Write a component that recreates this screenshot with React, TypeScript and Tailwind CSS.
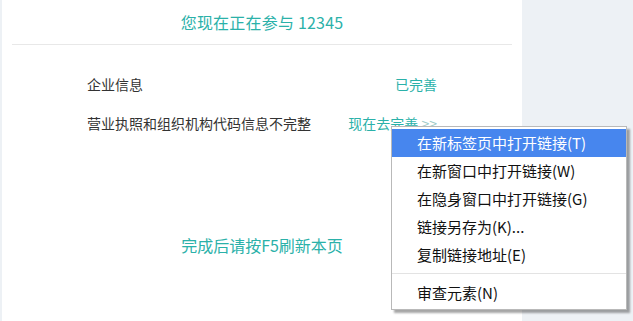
import type { CSSProperties } from "react";

// Page: white info panel with a browser-style context menu open over the link.

const font: CSSProperties = {
  fontFamily: '"Microsoft YaHei", "Noto Sans CJK SC", "Noto Sans", sans-serif',
};

const menuItems = [
  "在新标签页中打开链接(T)",
  "在新窗口中打开链接(W)",
  "在隐身窗口中打开链接(G)",
  "链接另存为(K)...",
  "复制链接地址(E)",
];

function ContextMenu() {
  return (
    <div className="absolute left-[391px] top-[126px] w-[236px] border border-[#b9b9b9] bg-white pt-[2px] pb-[2px] text-[15px] text-[#111] shadow-[3px_3px_2px_rgba(0,0,0,0.35)]">
      {menuItems.map((t, i) => (
        <div
          key={t}
          className={
            "flex h-[28px] items-center pl-[25px] " +
            (i === 0 ? "bg-[#4786ee] text-white" : "")
          }
        >
          {t}
        </div>
      ))}
      <div className="mt-[4px] mb-[5px] h-px bg-[#e3e3e3]" />
      <div className="flex h-[28px] items-center pl-[25px]">审查元素(N)</div>
    </div>
  );
}

export default function App() {
  return (
    <div style={font} className="relative flex h-[321px] w-[633px] overflow-hidden bg-[#edf1f5]">
      <div className="ml-[2px] flex w-[520px] flex-col bg-white">
        <div className="mx-[10px] flex h-[45px] items-center justify-center border-b border-[#e8e8e8] text-[16px] tracking-[0.2px] text-[#2bb1a9]">
          您现在正在参与 12345
        </div>

        <div className="flex flex-col px-[85px] pt-[28px] text-[14px] text-[#333]">
          <div className="flex h-[22px] items-center justify-between">
            <span>企业信息</span>
            <span className="text-[#2bb1a9]">已完善</span>
          </div>
          <div className="mt-[17px] flex h-[22px] items-center justify-between">
            <span>营业执照和组织机构代码信息不完整</span>
            <span className="text-[#2bb1a9]">
              现在去完善 <span className="text-[#9cc9c6]">&gt;&gt;</span>
            </span>
          </div>
        </div>

        <div className="mt-[99px] flex justify-center text-[16px] text-[#2bb1a9]">
          完成后请按F5刷新本页
        </div>
      </div>

      <ContextMenu />
    </div>
  );
}
